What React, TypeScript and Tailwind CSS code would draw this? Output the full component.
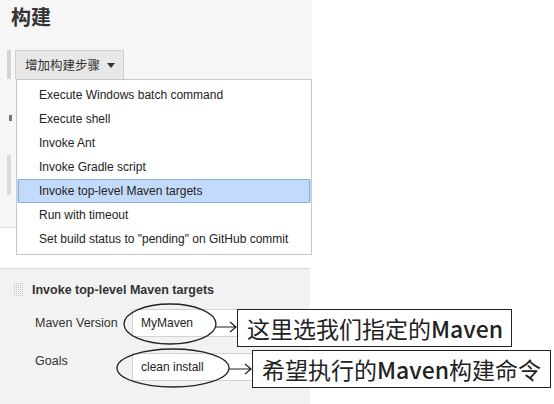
const menuItems = [
  'Execute Windows batch command',
  'Execute shell',
  'Invoke Ant',
  'Invoke Gradle script',
  'Invoke top-level Maven targets',
  'Run with timeout',
  'Set build status to "pending" on GitHub commit',
]

const selected = 'Invoke top-level Maven targets'

function Grip() {
  const dots = []
  for (let r = 0; r < 7; r++) {
    for (let c = 0; c < 5; c++) {
      dots.push(<rect key={`${r}-${c}`} x={c * 2} y={r * 2} width="1" height="1" fill="#c4c4c4" />)
    }
  }
  return (
    <svg width="10" height="14" viewBox="0 0 10 14" className="shrink-0">
      {dots}
    </svg>
  )
}

function Field({ label, value, labelTop }: { label: string; value: string; labelTop: string }) {
  return (
    <div className="flex h-[28px] items-start">
      <span className={`w-[132px] shrink-0 whitespace-nowrap pl-[35px] text-[12.5px] leading-[14px] text-[#333] ${labelTop}`}>{label}</span>
      <div className="flex h-[28px] w-[178px] items-center border border-[#d3d3d3] bg-white pl-[8px] text-[12px] text-[#222]">
        {value}
      </div>
    </div>
  )
}

export default function App() {
  return (
    <div className="relative h-[404px] w-[554px] overflow-hidden bg-white font-['Liberation_Sans',Arial,sans-serif] text-[#333]">
      <div className="relative h-[228px] w-[312px] border-b border-[#dedede] bg-[#f6f6f6]">
        <h1 className="h-[50px] pl-[11px] pt-[3px] font-['Noto_Sans_CJK_SC',sans-serif] text-[20px] font-bold leading-[28px] text-[#333]">
          构建
        </h1>
        <div className="flex h-[29px] items-stretch pl-[7px]">
          <div className="w-[4px] bg-[#d4d4d4]" />
          <div className="ml-[4px] flex w-[109px] items-center gap-[7px] border border-b-0 border-[#d0d0d0] bg-[#e8e8e8] pl-[9px] font-['Noto_Sans_CJK_SC',sans-serif] text-[12.5px] text-[#333]">
            增加构建步骤
            <svg width="8" height="5" viewBox="0 0 8 5">
              <path d="M0 0h8L4 5z" fill="#333" />
            </svg>
          </div>
        </div>
        <div className="relative h-[148px]">
          <div className="ml-[9px] mt-[36px] h-[6px] w-[3px] bg-[#777]" />
          <div className="ml-[7px] mt-[34px] h-[40px] w-[4px] bg-[#dadada]" />
        </div>
      </div>

      <div className="absolute left-[16px] top-[79px] w-[296px] border border-[#c9c9c9] bg-white py-[3px] text-[12px] text-[#222]">
        {menuItems.map((item) => (
          <div key={item} className={`flex h-[24px] items-center ${item === selected ? 'bg-[#c3dbfa]' : ''}`}>
            <div className={`flex h-full w-full items-center ${item === selected ? 'mx-[1px] rounded-[2px] border border-[#85ace4] pl-[20px]' : 'pl-[22px]'}`}>
              {item}
            </div>
          </div>
        ))}
      </div>

      <div className="mt-[40px] h-[136px] w-[310px] border-t border-[#dcdcdc] bg-[#f2f2f2]">
        <div className="flex items-center gap-[8px] pl-[14px] pt-[12px]">
          <Grip />
          <span className="text-[12.5px] font-bold text-[#333]">Invoke top-level Maven targets</span>
        </div>
        <div className="mt-[9px] flex flex-col gap-[16px]">
          <Field label="Maven Version" value="MyMaven" labelTop="pt-[7px]" />
          <Field label="Goals" value="clean install" labelTop="pt-[1px]" />
        </div>
      </div>

      <svg className="pointer-events-none absolute left-0 top-0" width="554" height="404" viewBox="0 0 554 404">
        <ellipse cx="170" cy="324" rx="46" ry="20" fill="none" stroke="#222" strokeWidth="1.3" />
        <ellipse cx="173" cy="368" rx="56" ry="19" fill="none" stroke="#222" strokeWidth="1.3" />
        <path d="M216 327H236M230 322L236 327L230 332" fill="none" stroke="#222" strokeWidth="1.2" />
        <path d="M229 369H251M245 364L251 369L245 374" fill="none" stroke="#222" strokeWidth="1.2" />
      </svg>

      <div className="absolute left-[237px] top-[309px] flex h-[38px] w-[275px] items-center border-[1.5px] border-[#222] bg-white pl-[9px] font-['Noto_Sans_CJK_SC',sans-serif] text-[23px] leading-none text-[#222]">
        这里选我们指定的<span className="font-medium">Maven</span>
      </div>
      <div className="absolute left-[252px] top-[350px] flex h-[38px] w-[299px] items-center border-[1.5px] border-[#222] bg-white pl-[9px] font-['Noto_Sans_CJK_SC',sans-serif] text-[23px] leading-none text-[#222]">
        希望执行的<span className="font-medium">Maven</span>构建命令
      </div>
    </div>
  )
}
